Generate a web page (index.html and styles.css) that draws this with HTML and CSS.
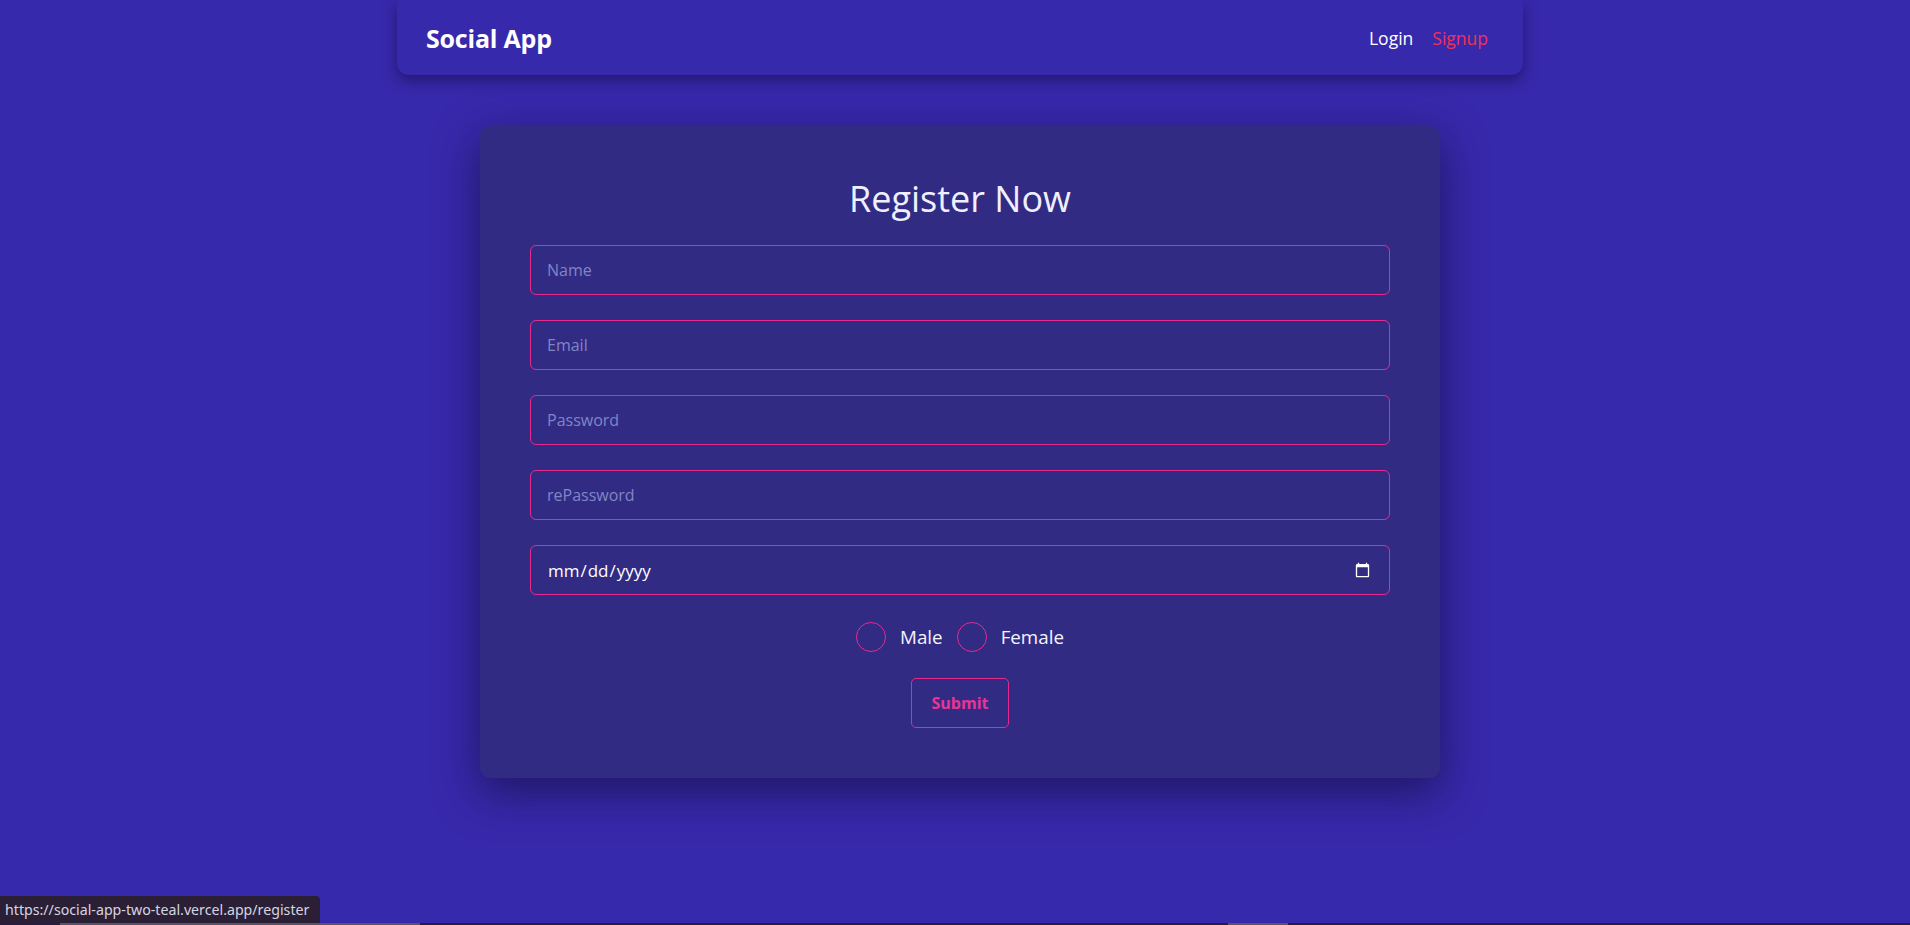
FILE: index.html
```html
<!DOCTYPE html>
<html lang="en">
<head>
<meta charset="utf-8">
<title>Social App - Register</title>
<link rel="stylesheet" href="styles.css">
</head>
<body>
<div class="page">
  <nav class="navbar">
    <a class="brand" href="#">Social App</a>
    <div class="nav-links">
      <a class="nav-link" href="#">Login</a>
      <a class="nav-link active" href="#">Signup</a>
    </div>
  </nav>

  <main class="card">
    <h1 class="title">Register Now</h1>
    <form class="form">
      <input class="field" type="text" placeholder="Name">
      <input class="field" type="email" placeholder="Email">
      <input class="field" type="password" placeholder="Password">
      <input class="field" type="password" placeholder="rePassword">
      <input class="field date" type="date">
      <div class="gender">
        <label class="radio"><input type="radio" name="gender"><span>Male</span></label>
        <label class="radio"><input type="radio" name="gender"><span>Female</span></label>
      </div>
      <button class="submit" type="button">Submit</button>
    </form>
  </main>
</div>
<div class="status">https://social-app-two-teal.vercel.app/register</div>
<div class="hscroll"><span class="thumb t1"></span><span class="thumb t2"></span></div>
</body>
</html>
```

FILE: styles.css
```css
* { box-sizing: border-box; }
html, body { margin: 0; height: 100%; overflow: hidden; }
body {
  background: #3729ab;
  font-family: "Open Sans", "Noto Sans", sans-serif;
  color: #ffffff;
}
.page {
  padding-left: 10px;
  display: flex;
  flex-direction: column;
  align-items: center;
}
.navbar {
  width: 1126px;
  height: 75px;
  background: #3729ac;
  border-radius: 0 0 12px 12px;
  box-shadow: 0 6px 14px rgba(20, 10, 70, 0.55);
  display: flex;
  align-items: center;
  justify-content: space-between;
  padding: 0 35px 0 29px;
}
.brand {
  color: #ffffff;
  font-weight: 700;
  font-size: 25px;
  text-decoration: none;
  letter-spacing: -0.2px;
}
.nav-links { display: flex; gap: 19px; }
.nav-link {
  color: #ffffff;
  font-size: 17.5px;
  text-decoration: none;
}
.nav-link.active { color: #f03255; }

.card {
  width: 960px;
  margin-top: 51px;
  background: #322b84;
  border-radius: 10px;
  box-shadow: 0 14px 44px rgba(25, 18, 80, 0.8);
  padding: 49px 50px 50px;
}
.title {
  margin: 0 0 22px;
  text-align: center;
  font-weight: 400;
  font-size: 36px;
  line-height: 48px;
  color: #eef0ff;
}
.form {
  display: flex;
  flex-direction: column;
  align-items: center;
}
.field {
  width: 100%;
  height: 50px;
  margin-bottom: 25px;
  background: transparent;
  border: 1px solid #e62a8e;
  border-radius: 6px;
  padding: 0 16px;
  font-family: inherit;
  font-size: 16px;
  color: #ffffff;
  outline: none;
}
.field::placeholder { color: #8086c4; }
.field.date { color-scheme: dark; color: #ffffff; font-size: 17px; margin-bottom: 27px; }
.field.date::-webkit-calendar-picker-indicator { opacity: 1; }

.gender {
  display: flex;
  gap: 14px;
  align-items: center;
  height: 30px;
  margin-bottom: 26px;
}
.radio {
  display: flex;
  align-items: center;
  gap: 14px;
  font-size: 18.8px;
  color: #f4f4ff;
}
.radio input {
  appearance: none;
  -webkit-appearance: none;
  margin: 0;
  width: 30px;
  height: 30px;
  border: 1px solid #e62a8e;
  border-radius: 50%;
  background: transparent;
}
.submit {
  width: 98px;
  height: 50px;
  background: transparent;
  border: 1px solid #e62a8e;
  border-radius: 5px;
  color: #ea3493;
  font-family: inherit;
  font-weight: 700;
  font-size: 16px;
}

.status {
  position: fixed;
  left: 0;
  bottom: 2px;
  height: 27px;
  width: 320px;
  padding: 4px 0 0 5px;
  background: #2b1f35;
  border-top-right-radius: 4px;
  color: #d6d6e2;
  font-size: 14.2px;
  font-family: "Noto Sans", "Open Sans", sans-serif;
}
.hscroll {
  position: fixed;
  left: 0;
  right: 0;
  bottom: 0;
  height: 2px;
  background: #261c42;
}
.thumb {
  position: absolute;
  top: 0;
  height: 2px;
  background: #5a5468;
}
.t1 { left: 60px; width: 360px; }
.t2 { left: 1228px; width: 60px; }
```
